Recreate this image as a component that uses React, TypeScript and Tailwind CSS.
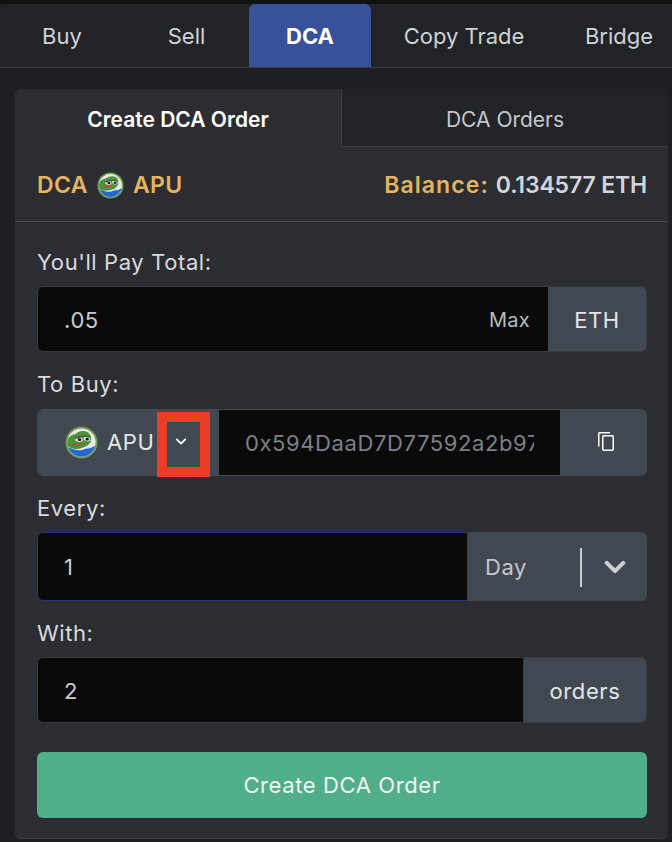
import React from "react";

function Apu({ size }: { size: number }) {
  return (
    <svg width={size} height={size} viewBox="0 0 32 32" className="shrink-0">
      <circle cx="16" cy="16" r="15.5" fill="#6f9c4e" />
      <circle cx="16" cy="16" r="13.6" fill="#e8ebe6" />
      <clipPath id={`c${size}`}>
        <circle cx="16" cy="16" r="13.6" />
      </clipPath>
      <g clipPath={`url(#c${size})`}>
        <path d="M2 19C1 12 6 8 10 8c3-3 8-4 12-2 3 2 4 5 3 9-2 4-5 5-8 6-5 2-11 2-15-2z" fill="#4f8f3f" />
        <path d="M1 19c5 4 13 6 19 3 3-1 6-3 9-3v15H1z" fill="#2566d6" />
        <path d="M29 12c0 4-3 7-9 10 4 0 7-1 9-3z" fill="#e8ebe6" />
        <path d="M10 12.5l6.5-1.5 .6 3.5c-2.5 1.5-5.5 1-7-.5z" fill="#eef0ea" />
        <path d="M18 10.5l6 .5 .4 3c-2 1.3-4.6 1-6-.6z" fill="#eef0ea" />
        <rect x="12.5" y="12" width="3.2" height="2.4" fill="#111" />
        <rect x="20" y="11.6" width="3" height="2.4" fill="#111" />
        <path d="M10 11.5l8-1.6M18 10l6.5 .6" stroke="#2f5f2a" strokeWidth="1.2" fill="none" />
        <path d="M7 18.5l10-1.5" stroke="#a2553f" strokeWidth="1.8" fill="none" />
      </g>
    </svg>
  );
}

function Chevron({ className }: { className: string }) {
  return (
    <svg viewBox="0 0 16 10" className={className} fill="none" stroke="currentColor" strokeLinecap="round" strokeLinejoin="round">
      <path d="M2 2l6 6 6-6" />
    </svg>
  );
}

export default function App() {
  return (
    <div className="w-[672px] h-[842px] overflow-hidden bg-[#1d1f22] border-t-[4px] border-[#101113] font-['Inter',sans-serif] text-[#d5d8dc]">
      <div className="flex h-[64px] bg-[#212327] border-b border-[#3a3d42] text-[22px] text-[#cfd2d6] rounded-tl-[6px]">
        <div className="w-[124px] flex items-center justify-center pt-[1px]">Buy</div>
        <div className="w-[125px] flex items-center justify-center pt-[1px]">Sell</div>
        <div className="w-[122px] flex items-center justify-center pt-[1px] bg-[#37519b] rounded-t-[6px] font-bold text-white">DCA</div>
        <div className="w-[186px] flex items-center justify-center pt-[1px]">Copy Trade</div>
        <div className="w-[115px] flex items-center justify-center pt-[1px] pl-[9px]">Bridge</div>
      </div>

      <div className="ml-[15px] mt-[21px] w-[653px] h-[750px] rounded-[6px] bg-[#2b2d32] border-b border-[#383b40]">
        <div className="flex h-[58px] text-[21px]">
          <div className="w-[326px] flex items-center justify-center pt-[4px] rounded-t-[6px] font-semibold text-white bg-[#2b2d32]">Create DCA Order</div>
          <div className="flex-1 flex items-center justify-center pt-[5px] rounded-tr-[6px] bg-[#212327] border-b border-l border-[#3a3d42] text-[#c4c7cc]">DCA Orders</div>
        </div>

        <div className="flex h-[75px] items-center justify-between pt-[2px] pl-[22px] pr-[21px] border-b border-[#494c52] text-[23px] tracking-[0.4px] font-semibold text-[#e6b45e]">
          <div className="flex items-center gap-[9px]">
            <span>DCA</span>
            <Apu size={27} />
            <span>APU</span>
          </div>
          <div className="tracking-[1.1px]">
            Balance: <span className="tracking-[-0.15px] text-[#d3d6da]">0.134577 ETH</span>
          </div>
        </div>

        <div className="px-[22px] pr-[21px] text-[22px] tracking-[0.6px]">
          <div className="h-[64px] pt-[25px] leading-[30px] text-[#d9dbde]">You'll Pay Total:</div>
          <div className="flex h-[66px] pt-0 rounded-[6px] overflow-hidden border border-[#383b40]">
            <div className="flex-1 flex items-center justify-between bg-[#0a0a0b] pl-[26px] pr-[18px] pt-[2px] text-[#c9ccd0]">
              <span>.05</span>
              <span className="text-[20px] tracking-[0.3px] text-[#b9bcc1]">Max</span>
            </div>
            <div className="w-[98px] flex items-center justify-center pt-[2px] bg-[#424851] text-[#e4e6e8]">ETH</div>
          </div>

          <div className="h-[57px] pt-[17px] leading-[30px] text-[#d9dbde]">To Buy:</div>
          <div className="flex h-[67px] rounded-[6px] overflow-hidden border border-[#454950]">
            <div className="w-[181px] flex items-center bg-[#424851] pl-[27px] text-[#e4e6e8]">
              <Apu size={33} />
              <span className="ml-[9px]">APU</span>
            </div>
            <div className="w-[341px] flex items-center bg-[#0a0a0b] pl-[26px] pt-[2px] text-[#7d8087] whitespace-nowrap">
              <span className="block w-[289px] overflow-hidden">0x594DaaD7D77592a2b97</span>
            </div>
            <div className="flex-1 flex items-center justify-center pl-[6px] pb-[2px] bg-[#424851] text-white">
              <svg width="16" height="19" viewBox="0 0 16 19" fill="none" stroke="currentColor" strokeWidth="1.5">
                <rect x="4.75" y="3.75" width="10.5" height="14.5" rx="1" />
                <path d="M.75 14.5V1.5a.75.75 0 0 1 .75-.75H12" />
              </svg>
            </div>
          </div>

          <div className="h-[56px] pt-[17px] leading-[30px] text-[#d9dbde]">Every:</div>
          <div className="flex h-[69px] rounded-[6px] overflow-hidden">
            <div className="w-[431px] flex items-center bg-[#0a0a0b] border border-[#1f3a7a] rounded-l-[6px] pl-[26px] pt-[1px] text-[#c9ccd0]">1</div>
            <div className="flex-1 flex items-center bg-[#424851] pl-[17px] pt-[1px] text-[#c4c7cc]">
              <span className="w-[95px]">Day</span>
              <span className="w-[2px] h-[39px] bg-[#cdced0]"></span>
              <Chevron className="ml-[22px] w-[22px] h-[14px] stroke-[3] text-[#cdced0]" />
            </div>
          </div>

          <div className="h-[56px] pt-[17px] leading-[30px] text-[#d9dbde]">With:</div>
          <div className="flex h-[66px] rounded-[6px] overflow-hidden border border-[#383b40]">
            <div className="flex-1 flex items-center bg-[#0a0a0b] pl-[26px] pt-[2px] text-[#c9ccd0]">2</div>
            <div className="w-[123px] flex items-center justify-center bg-[#424851] border-l border-[#383b40] pt-[2px] text-[#e4e6e8]">orders</div>
          </div>

          <button className="mt-[29px] w-full h-[66px] rounded-[6px] bg-[#50ae8b] text-[#f2f5f3]">Create DCA Order</button>
        </div>
      </div>
      <div className="absolute left-[157px] top-[412px] w-[53px] h-[65px] border-[10px] border-[#e93e25] flex items-center justify-center pr-[6px] pb-[6px] text-white">
        <Chevron className="w-[12px] h-[7px] stroke-[2.6]" />
      </div>
    </div>
  );
}
